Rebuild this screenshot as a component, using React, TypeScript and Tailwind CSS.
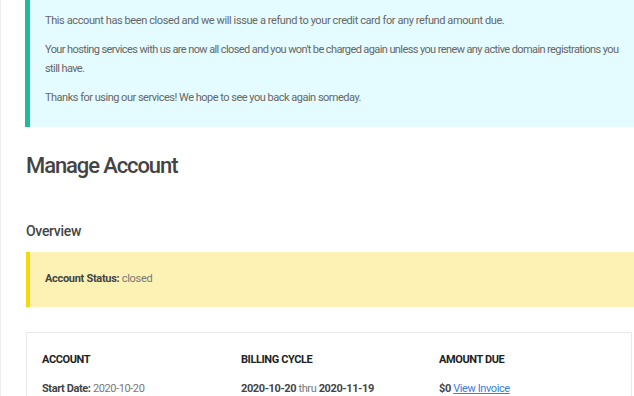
export default function App() {
  const body = { fontFamily: '"Roboto", "Liberation Sans", sans-serif' };
  const head = { fontFamily: '"Roboto", "Liberation Sans", sans-serif' };
  return (
    <div className="w-[634px] h-[396px] overflow-hidden bg-white border-l border-[#eeeeee]" style={body}>
      <div className="ml-[24px]">
        <div className="bg-[#e4fcff] border-l-[5px] border-[#1cbc9c] pl-[15px] pt-[11px] pb-[20px] pr-[14px] text-[11px] leading-[19px] text-[#666666] tracking-[-0.4px]">
          <p>This account has been closed and we will issue a refund to your credit card for any refund amount due.</p>
          <p className="mt-[10px] tracking-[-0.6px]">Your hosting services with us are now all closed and you won't be charged again unless you renew any active domain registrations you still have.</p>
          <p className="mt-[10px] tracking-[-0.5px]">Thanks for using our services! We hope to see you back again someday.</p>
        </div>
        <h1 className="mt-[24px] ml-[1px] text-[22px] leading-[30px] font-medium text-[#444444] tracking-[-1.1px]" style={head}>Manage Account</h1>
        <h2 className="mt-[40px] ml-[1px] text-[14px] leading-[20px] font-medium text-[#444444] tracking-[-0.3px]" style={head}>Overview</h2>
        <div className="mt-[11px] ml-[1px] h-[55px] flex items-center bg-[#fdf2b3] border-l-[4px] border-[#f6d80c] pl-[15px] text-[11px] text-[#777777] tracking-[-0.3px]">
          <span><span className="font-bold text-[#444444]">Account Status:</span> closed</span>
        </div>
        <div className="mt-[25px] ml-[1px] mr-[2px] border border-[#e8e8e8] pl-[15px] pt-[20px] h-[80px]">
          <div className="grid grid-cols-[199px_198px_1fr] text-[11px] leading-[16px] tracking-[-0.4px]">
            <div>
              <div className="font-bold text-[#222222] uppercase leading-[14px]">Account</div>
              <div className="mt-[14px] text-[#777777]"><span className="font-bold text-[#444444]">Start Date:</span> 2020-10-20</div>
            </div>
            <div>
              <div className="font-bold text-[#222222] uppercase leading-[14px]">Billing Cycle</div>
              <div className="mt-[14px] text-[#777777]"><span className="font-bold text-[#444444]">2020-10-20</span> thru <span className="font-bold text-[#444444]">2020-11-19</span></div>
            </div>
            <div>
              <div className="font-bold text-[#222222] uppercase leading-[14px]">Amount Due</div>
              <div className="mt-[14px] text-[#777777]"><span className="font-bold text-[#444444]">$0</span> <a className="text-[#3b7ddd] underline">View Invoice</a></div>
            </div>
          </div>
        </div>
      </div>
    </div>
  );
}
